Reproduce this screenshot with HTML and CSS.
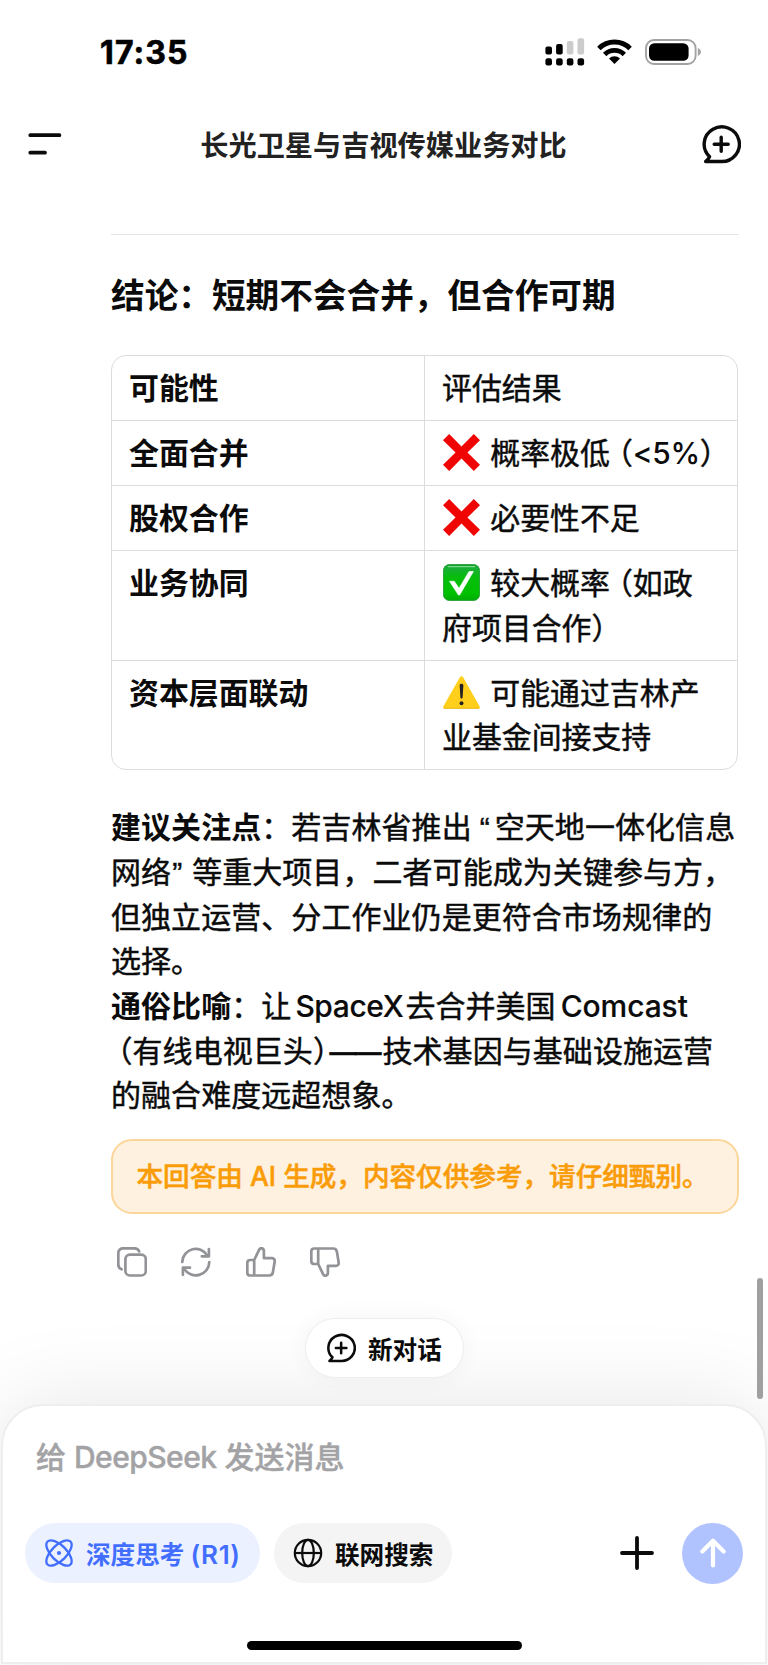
FILE: index.html
```
<!DOCTYPE html>
<html lang="zh-CN">
<head>
<meta charset="utf-8">
<title>长光卫星与吉视传媒业务对比</title>
<link rel="stylesheet" href="styles.css">
</head>
<body>
<div class="screen">
  <header class="status">
    <span class="time">17:35</span>
    <div class="status-icons">
      <svg class="signal" width="40" height="28" viewBox="0 0 40 28">
        <g fill="#000"><rect x="0.4" y="8.400" width="6.600" height="8" rx="2"/><rect x="11.100" y="6" width="6.600" height="10.400" rx="2"/>
        <rect x="0.4" y="20.200" width="6.600" height="7.200" rx="2.200"/><rect x="11.100" y="20.200" width="6.600" height="7.200" rx="2.200"/><rect x="21.800" y="20.200" width="6.600" height="7.200" rx="2.200"/><rect x="32.500" y="20.200" width="6.600" height="7.200" rx="2.200"/></g>
        <g fill="#ccc"><rect x="21.800" y="3" width="6.600" height="13.400" rx="2"/><rect x="32.500" y="0.200" width="6.600" height="16.200" rx="2"/></g>
      </svg>
      <svg class="wifi" width="35" height="26" viewBox="0 0 35 26">
        <g fill="none" stroke="#000" stroke-width="4.900"><path d="M1.900 9.400a22.200 22.200 0 0 1 31.200 0"/><path d="M7.700 15.400a14 14 0 0 1 19.600 0"/></g>
        <path d="M17.500 25 12 19.400a8 8 0 0 1 11 0Z"/>
      </svg>
      <svg class="battery" width="57" height="26" viewBox="0 0 57 26">
        <rect x="1" y="1" width="49.600" height="24" rx="8" fill="none" stroke="#a3a3a3" stroke-width="1.900"/>
        <rect x="4" y="4.200" width="39.600" height="17.600" rx="5.400"/>
        <path d="M52.800 9v8c1.900-.7 3.100-2.300 3.100-4s-1.200-3.300-3.100-4Z" fill="#a3a3a3"/>
      </svg>
    </div>
  </header>

  <nav class="topbar">
    <svg width="42" height="40" viewBox="0 0 42 40" fill="none" stroke="#0b0b0b" stroke-width="3.800" stroke-linecap="round"><path d="M6.300 10.200h29.100M6.300 27.700h14.700"/></svg>
    <h1 class="title">长光卫星与吉视传媒业务对比</h1>
    <svg width="40" height="40" viewBox="0 0 40 40" fill="none" stroke="#0b0b0b" stroke-width="3.400" stroke-linecap="round" stroke-linejoin="round"><path d="M20.200 36.500H4.600c1.500-1.300 3.400-3.100 4-4.800A17.600 17.300 0 1 1 20.200 36.500Z"/><path d="M20.200 12.300v14M13.200 19.300h14"/></svg>
  </nav>

  <main class="answer">
    <hr class="rule">
    <h2 class="heading">结论：短期不会合并，但合作可期</h2>
    <div class="table">
      <div class="row"><div class="cell key">可能性</div><div class="cell">评估结果</div></div>
      <div class="row"><div class="cell key">全面合并</div><div class="cell">
        <svg class="emoji" viewBox="0 0 36 36"><path d="M6 0 18 12.200 30 0l6 6-12.200 12L36 30l-6 6-12-12.200L6 36l-6-6 12.200-12L0 6Z" fill="#f00505"/></svg><span>概率极低<span class="open">（</span><span class="num">&lt;5%</span><span class="half">）</span></span></div></div>
      <div class="row"><div class="cell key">股权合作</div><div class="cell">
        <svg class="emoji" viewBox="0 0 36 36"><path d="M6 0 18 12.200 30 0l6 6-12.200 12L36 30l-6 6-12-12.200L6 36l-6-6 12.200-12L0 6Z" fill="#f00505"/></svg><span>必要性不足</span></div></div>
      <div class="row"><div class="cell key">业务协同</div><div class="cell">
        <svg class="emoji" viewBox="0 0 36 36"><defs><linearGradient id="g" x1="0" y1="0" x2="0" y2="1"><stop offset="0" stop-color="#12a02c"/><stop offset=".12" stop-color="#18b034"/><stop offset=".35" stop-color="#07bd0b"/><stop offset=".8" stop-color="#00c000"/><stop offset="1" stop-color="#02ab08"/></linearGradient></defs><rect x=".4" y=".4" width="35.200" height="35.200" rx="6" fill="url(#g)" stroke="#18962c" stroke-width=".8"/><path d="M5 2.500h26" stroke="#7fd98c" stroke-width="1.300" stroke-linecap="round"/><path d="M6.300 16.800H11L15.600 23.600 25.300 7.300H29.600L16.200 30.200H15Z" fill="#fff" stroke="#fff" stroke-width=".6" stroke-linejoin="round"/></svg><span>较大概率<span class="open">（</span>如政</span><br><span>府项目合作<span class="half">）</span></span></div></div>
      <div class="row"><div class="cell key">资本层面联动</div><div class="cell">
        <svg class="emoji" viewBox="0 0 36 36"><path d="M16.400 3.200c.8-1.300 2.400-1.300 3.200 0L35.700 31.500c.8 1.300 0 2.300-1.500 2.300H1.800C.3 33.800-.5 32.800.3 31.500Z" fill="#ffcf1c"/><path d="M1 33.300h34" stroke="#efb91f" stroke-width=".9"/><path d="M16.200 11.200c0-2.300 3.600-2.300 3.600 0l-.7 11.500c-.2 1.600-2 1.600-2.200 0Z" fill="#222"/><circle cx="18" cy="28.500" r="1.900" fill="#222"/></svg><span>可能通过吉林产</span><br><span>业基金间接支持</span></div></div>
    </div>

    <p class="body">
      <span class="line"><b>建议关注点</b>：若吉林省推出<span class="q1">“</span>空天地一体化信息</span>
      <span class="line">网络<span class="q2">”</span>等重大项目，二者可能成为关键参与方，</span>
      <span class="line">但独立运营、分工作业仍是更符合市场规律的</span>
      <span class="line">选择。</span>
      <span class="line"><b>通俗比喻</b>：让<span class="latin spacex">SpaceX</span>去合并美国<span class="latin comcast">Comcast</span></span>
      <span class="line"><span class="open first">（</span>有线电视巨头<span class="half">）</span><span class="dash">——</span>技术基因与基础设施运营</span>
      <span class="line">的融合难度远超想象。</span>
    </p>

    <div class="notice">本回答由 AI 生成，内容仅供参考，请仔细甄别。</div>

    <div class="actions">
      <svg width="30" height="30" viewBox="0 0 30 30"><rect x="8.400" y="7.700" width="20.400" height="20.800" rx="4.600"/><path d="M4.600 22.300C2.600 21.500 1.300 19.900 1.300 17.600V6.200c0-2.900 1.900-4.900 4.800-4.900H17.500c2.300 0 3.900 1.200 4.700 3.100"/></svg>
      <svg width="30" height="30" viewBox="0 0 30 30"><path d="M1.300 15A13.500 13.500 0 0 1 26.500 8.600M28.300 15A13.500 13.500 0 0 1 3.100 21.600"/><path d="M27.900 2.200V9.300H20.800M1.900 27.800V20.700H9"/></svg>
      <svg width="30" height="30" viewBox="0 0 30 30"><path d="M8.200 13 13.200 2.600c1.100-2.200 4.700-1.500 4.700 1.600v6.900h7.900c1.900 0 3.200 1.500 2.900 3.400l-1.800 10.800c-.3 1.900-1.800 3.200-3.700 3.200H4.200c-1.700 0-2.900-1.200-2.900-2.900V15.900c0-1.700 1.200-2.900 2.900-2.900Zm0 0V28.500"/></svg>
      <svg width="30" height="30" viewBox="0 0 30 30"><path d="M8.200 17 13.200 27.400c1.100 2.200 4.700 1.500 4.700-1.600v-6.900h7.900c1.900 0 3.200-1.500 2.900-3.400L26.900 4.700c-.3-1.900-1.800-3.200-3.700-3.200H4.200c-1.700 0-2.900 1.200-2.900 2.900V14.100c0 1.700 1.200 2.900 2.900 2.900Zm0 0V1.500"/></svg>
    </div>
  </main>

  <button class="newchat">
    <svg width="30" height="30" viewBox="0 0 40 40" fill="none" stroke="#0b0b0b" stroke-width="3.400" stroke-linecap="round" stroke-linejoin="round"><path d="M20.200 37.200H4.600c1.500-1.300 3.400-3.100 4-4.800A17.600 17.300 0 1 1 20.200 37.200Z"/><path d="M20.200 12.900v14M13.200 19.900h14"/></svg>
    <span>新对话</span>
  </button>

  <section class="composer">
    <div class="placeholder">给 <span class="ds">DeepSeek</span> 发送消息</div>
    <div class="tools">
      <button class="chip on">
        <svg width="28" height="28" viewBox="0 0 28 28" fill="none" stroke="#426eff" stroke-width="2.300"><ellipse cx="14" cy="14" rx="16.200" ry="7.600" transform="rotate(45 14 14)"/><ellipse cx="14" cy="14" rx="16.200" ry="7.600" transform="rotate(-45 14 14)"/><circle cx="14" cy="14" r="2.100" fill="#426eff" stroke="none"/></svg>
        <span>深度思考 <span class="r1">(R1)</span></span>
      </button>
      <button class="chip">
        <svg width="30" height="30" viewBox="0 0 30 30" fill="none" stroke="#0b0b0b" stroke-width="2.200"><circle cx="15" cy="15" r="13.200"/><ellipse cx="15" cy="15" rx="5.800" ry="13.200"/><path d="M1.800 15h26.400"/></svg>
        <span>联网搜索</span>
      </button>
      <svg class="plus" width="34" height="34" viewBox="0 0 34 34" stroke="#0b0b0b" stroke-width="3.800" stroke-linecap="round"><path d="M17 2v30M2 17h30"/></svg>
      <button class="send"><svg width="30" height="32" viewBox="0 0 30 32" fill="none" stroke="#fff" stroke-width="4.200" stroke-linecap="round" stroke-linejoin="round"><path d="M15 28.500V4M4.300 14.500 15 3.800l10.700 10.700"/></svg></button>
    </div>
    <div class="home"></div>
  </section>
  <div class="scrollbar"></div>
</div>
</body>
</html>
```
FILE: styles.css
```
* { box-sizing: border-box; }
body { margin: 0; background: #fff; color: #0b0b0b; font-family: Inter, "Noto Sans CJK SC", sans-serif; }
button { font: inherit; color: inherit; border: 0; padding: 0; margin: 0; }
svg { display: block; flex: none; }
.screen { position: relative; display: flex; flex-direction: column; width: 768px; height: 1665px; overflow: hidden; background: #fff; }
.status { display: flex; justify-content: space-between; align-items: center; height: 104px; padding: 0 66px 0 100px; }
.time { padding-top: 2px; font-size: 32px; font-weight: 700; color: #000; letter-spacing: 1.100px; line-height: 40px; -webkit-text-stroke: .6px; }
.status-icons { display: flex; align-items: center; }
.wifi { margin-left: 12px; }
.battery { margin-left: 13px; }
.topbar { display: flex; align-items: center; justify-content: space-between; height: 82px; padding: 0 27px 0 24px; }
.title { margin: 2px 0 0; font-size: 28.200px; line-height: 40px; font-weight: 700; color: #222; }
.answer { display: flex; flex-direction: column; padding: 0 29px 0 111px; }
.rule { width: 628px; height: 1px; margin: 48px 0 0; border: 0; background: #e5e5e5; }
.heading { margin: 38px 0 0; font-size: 33.650px; line-height: 46px; font-weight: 700; white-space: nowrap; }
.table { width: 627px; margin-top: 36px; border: 1px solid #dcdcdc; border-radius: 15px; overflow: hidden; font-size: 29.900px; line-height: 44.600px; }
.row { display: grid; grid-template-columns: 312px 1fr; border-top: 1px solid #dcdcdc; }
.row:first-child { border-top: 0; }
.cell { padding: 10px 0 9.400px 17px; white-space: nowrap; font-weight: 400; -webkit-text-stroke: .45px; }
.cell + .cell { border-left: 1px solid #dcdcdc; }
.cell.key { font-weight: 700; -webkit-text-stroke: 0; }
.emoji { display: inline-block; width: 37px; height: 37px; margin: 0 10px 0 1.300px; vertical-align: -7.500px; -webkit-text-stroke: 0; }
.open, .half { display: inline-block; font-feature-settings: "halt"; }
.open { padding-left: 8px; }
.open.first { padding-left: 6.500px; }
.num { font-weight: 500; letter-spacing: -.4px; -webkit-text-stroke: 0; }
.body { margin: 35px 0 0; font-size: 30px; line-height: 44.700px; letter-spacing: .06px; -webkit-text-stroke: .45px; }
.line { display: block; white-space: nowrap; }
.body b { -webkit-text-stroke: 0; }
.q1, .q2 { display: inline-block; font-family: "Liberation Sans", sans-serif; line-height: 30px; }
.q1 { width: 23px; padding-left: 8px; }
.q2 { width: 21px; padding-left: 1px; }
.latin { font-weight: 500; -webkit-text-stroke: .15px; }
.spacex { display: inline-block; width: 114px; padding-left: 4px; letter-spacing: -.4px; }
.comcast { padding-left: 5px; letter-spacing: -.1px; }
.dash { display: inline-block; width: 54.500px; padding-left: 1.500px; font-size: 26.500px; font-weight: 600; letter-spacing: -1px; line-height: 30px; }
.notice { width: 628px; height: 75px; margin-top: 21px; padding: 0 0 0 23.500px; border: 2px solid #fbd69b; border-radius: 21px; background: #fff1df; color: #f99c08; font-size: 26.600px; font-weight: 500; line-height: 71px; white-space: nowrap; -webkit-text-stroke: .5px; }
.actions { display: flex; gap: 34.300px; margin: 33px 0 0 6px; fill: none; stroke: #929397; stroke-width: 2.700; stroke-linecap: round; stroke-linejoin: round; }
.newchat { display: flex; align-items: center; align-self: center; width: 159px; height: 60px; margin: 41px 0 0 0; padding-left: 20px; gap: 12.500px; border: 1px solid #eee; border-radius: 30px; background: #fff; box-shadow: 0 0 24px rgba(0,0,0,.045); font-size: 24.600px; font-weight: 600; position: relative; z-index: 2; }
.composer { position: relative; z-index: 1; display: flex; flex-direction: column; width: 766px; height: 260px; margin: 26px 0 0 1px; padding: 0 22px; border: 2px solid #eee; border-radius: 42px 42px 0 0; background: #fff; box-shadow: 0 0 90px rgba(0,0,0,.1); }
.placeholder { margin: 29px 0 0 11px; font-size: 30px; line-height: 44px; color: #a3a3a6; font-weight: 500; white-space: nowrap; -webkit-text-stroke: .4px; }
.ds { letter-spacing: -.55px; }
.tools { display: flex; align-items: center; height: 61px; margin-top: 43.500px; }
.chip { display: flex; align-items: center; height: 60px; border-radius: 30px; background: #f4f4f4; font-size: 24.600px; font-weight: 600; gap: 12px; padding-left: 19px; width: 178px; white-space: nowrap; }
.chip.on { width: 235px; margin-right: 14px; gap: 13px; padding-left: 20px; background: #ebf1ff; color: #426eff; }
.r1 { font-size: 26px; letter-spacing: .7px; }
.plus { margin-left: auto; margin-right: 28px; }
.send { display: flex; align-items: center; justify-content: center; width: 61px; height: 61px; border-radius: 50%; background: #b1c3ff; }
.home { width: 275px; height: 9px; margin: 57px auto 0; border-radius: 5px; background: #000; }
.scrollbar { position: absolute; right: 5px; top: 1278px; width: 6px; height: 121px; border-radius: 3px; background: #a0a0a0; z-index: 3; }
```
